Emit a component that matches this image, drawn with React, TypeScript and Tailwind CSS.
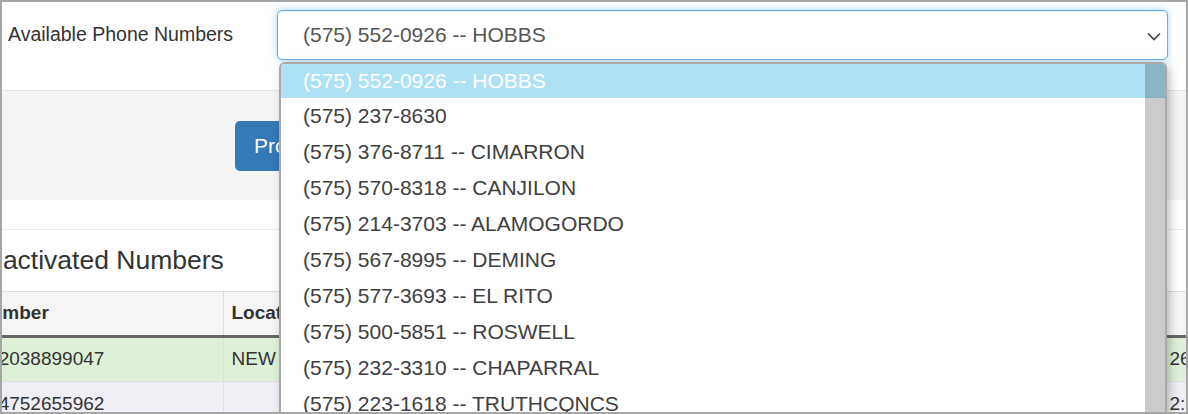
import React from "react"

const options = [
  "(575) 552-0926 -- HOBBS",
  "(575) 237-8630",
  "(575) 376-8711 -- CIMARRON",
  "(575) 570-8318 -- CANJILON",
  "(575) 214-3703 -- ALAMOGORDO",
  "(575) 567-8995 -- DEMING",
  "(575) 577-3693 -- EL RITO",
  "(575) 500-5851 -- ROSWELL",
  "(575) 232-3310 -- CHAPARRAL",
  "(575) 223-1618 -- TRUTHCQNCS",
  "(575) 312-4410 -- TAOS",
]

const rows = [
  { number: "+12038899047", location: "NEW HAVEN, CT", last: "26", cls: "bg-[#dff0d8]" },
  { number: "+14752655962", location: "", last: "2:", cls: "bg-[#efeff5]" },
]

export default function App() {
  return (
    <div className="relative w-[1188px] h-[414px] overflow-hidden border-2 border-[#a6a6a6] bg-white font-['Liberation_Sans',Arial,sans-serif] text-[#333]">
      {/* header with select */}
      <div className="flex h-[88px] bg-white">
        <div className="w-[275px] h-[50px] mt-[8px] pl-[6px] flex items-center text-[19.5px] text-[#333]">
          Available Phone Numbers
        </div>
        <div className="relative w-[891px] h-[50px] mt-[8px] flex items-center rounded-[5px] border border-[#66afe9] bg-white pl-[25px] text-[21px] text-[#555] shadow-[inset_0_1px_1px_rgba(0,0,0,0.075),0_0_7px_rgba(102,175,233,0.6)]">
          (575) 552-0926 -- HOBBS
          <svg className="absolute right-[6px] top-[21px]" width="14" height="9" viewBox="0 0 14 9">
            <polyline points="1,1.5 7,7.5 13,1.5" fill="none" stroke="#444" strokeWidth="1.7" />
          </svg>
        </div>
      </div>

      {/* grey action band */}
      <div className="h-[110px] border-t border-[#e6e6e6] bg-[#f4f4f4] pt-[30px] pl-[233px]">
        <button className="h-[50px] rounded-[5px] bg-[#337ab7] px-[19px] text-[21px] text-white">
          Provision Number
        </button>
      </div>

      <div className="h-[30px] border-b border-[#ececec] bg-white" />

      {/* lower content, scrolled horizontally */}
      <div className="ml-[-33px] w-[1250px]">
        <div className="h-[61px] flex items-center text-[26.5px] text-[#333]">Deactivated Numbers</div>
        <table className="w-full border-collapse text-[19px]">
          <thead>
            <tr className="h-[45px] bg-[#f5f5f5] border-t border-[#ddd] border-b-[3px] border-b-[#666]">
              <th className="w-[254px] pl-[8px] text-left font-bold text-[#333] border-r border-[#ddd]">Number</th>
              <th className="w-[479px] pl-[8px] text-left font-bold text-[#333] border-r border-[#ddd]">Location</th>
              <th className="w-[459px] pl-[8px] text-left font-bold text-[#333] border-r border-[#ddd]">Deactivated</th>
              <th className="pl-[8px] text-left font-bold text-[#333]"></th>
            </tr>
          </thead>
          <tbody>
            {rows.map((r) => (
              <tr key={r.number} className={`h-[45px] border-b border-[#ddd] ${r.cls}`}>
                <td className="pl-[8px] border-r border-[#ddd]">{r.number}</td>
                <td className="pl-[8px] border-r border-[#ddd]">{r.location}</td>
                <td className="pl-[8px] border-r border-[#ddd]"></td>
                <td className="pl-[8px]">{r.last}</td>
              </tr>
            ))}
          </tbody>
        </table>
      </div>

      {/* open dropdown list */}
      <div className="absolute left-[277px] top-[60px] w-[888px] h-[400px] flex rounded-t-[6px] border-2 border-[#a9a9a9] bg-white overflow-hidden shadow-[3px_3px_10px_rgba(0,0,0,0.25)]">
        <div className="flex-1">
          {options.map((o, i) => (
            <div
              key={o}
              className={
                i === 0
                  ? "h-[34px] flex items-center pl-[22px] text-[21px] bg-[#ade1f5] text-white"
                  : "h-[36px] flex items-center pl-[22px] text-[21px] text-[#404040]"
              }
            >
              {o}
            </div>
          ))}
        </div>
        <div className="w-[20px] flex flex-col bg-[#cbcbcb]">
          <div className="h-[34px] bg-[#8ab3c4]" />
        </div>
      </div>
    </div>
  )
}
